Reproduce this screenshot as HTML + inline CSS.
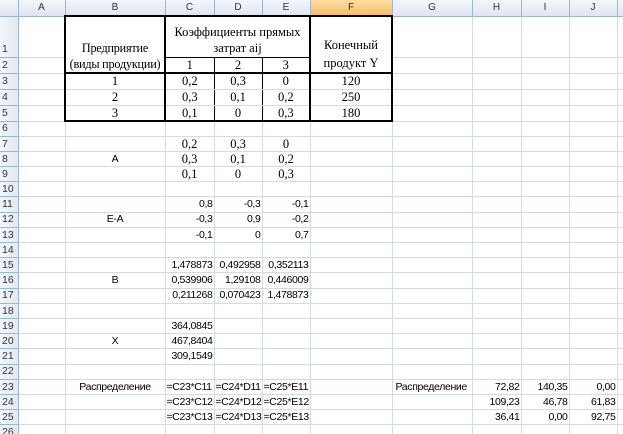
<!DOCTYPE html>
<html><head><meta charset="utf-8"><style>
html,body{margin:0;padding:0;background:#fff;width:623px;height:434px;overflow:hidden}
table{border-collapse:collapse;table-layout:fixed;width:623px;font-family:"Liberation Sans",sans-serif;font-size:10.5px;letter-spacing:-0.35px;color:#000}
td{border-right:1px solid #d4dbe8;border-bottom:1px solid #d4dbe8;padding:0 1px;white-space:nowrap;overflow:visible;line-height:1}
td.h{background:linear-gradient(#f3f6fb,#dfe6f1);border-color:#9eb6ce;color:#333;text-align:center;font-size:10px;letter-spacing:0}
td.hf{background:linear-gradient(#fbdca2,#f6c06a);border-color:#9eb6ce;color:#333;text-align:center;font-size:10px;letter-spacing:0}
td.rn{background:linear-gradient(90deg,#f3f6fb,#e2e9f3);border-color:#9eb6ce;color:#333;text-align:left;padding-left:2px;font-size:10.5px;letter-spacing:0}
.s{font-family:"Liberation Serif",serif;font-size:12.5px;text-align:center;letter-spacing:0}
.r{text-align:right}.c{text-align:center}
.bl{border-left:2px solid #000}.br{border-right:2px solid #000}.bt{border-top:2px solid #000}.bb{border-bottom:2px solid #000}
.tr{border-right:1px solid #000}.tb{border-bottom:1px solid #000}
tr.n{height:15.2px}
</style></head><body>
<table>
<colgroup><col style="width:18px"><col style="width:47px"><col style="width:100px"><col style="width:49px"><col style="width:48px"><col style="width:48px"><col style="width:82px"><col style="width:80px"><col style="width:49px"><col style="width:48px"><col style="width:48px"><col style="width:6px"></colgroup>
<tr style="height:16px"><td class="h"></td><td class="h">A</td><td class="h">B</td><td class="h">C</td><td class="h">D</td><td class="h">E</td><td class="hf">F</td><td class="h">G</td><td class="h">H</td><td class="h">I</td><td class="h">J</td><td class="h"></td></tr>
<tr style="height:41px"><td class="rn" style="vertical-align:bottom;padding-bottom:2px">1</td><td></td><td class="s bl br bt" rowspan="2" style="vertical-align:bottom;padding-bottom:0px;line-height:16px;font-size:12.2px;letter-spacing:-0.2px;border-bottom:2px solid #000">Предприятие<br>(виды продукции)</td><td class="s bt br tb" colspan="3" style="line-height:16px;vertical-align:bottom;padding-bottom:1px">Коэффициенты прямых<br>затрат aij</td><td class="s bt br" rowspan="2" style="vertical-align:bottom;line-height:18px;border-bottom:2px solid #000">Конечный<br>продукт Y</td><td></td><td></td><td></td><td></td><td></td></tr>
<tr style="height:16px"><td class="rn">2</td><td></td><td class="s bb tr">1</td><td class="s bb tr">2</td><td class="s bb br">3</td><td></td><td></td><td></td><td></td><td></td></tr>
<tr style="height:16px"><td class="rn">3</td><td></td><td class="s bl br">1</td><td class="s tr">0,2</td><td class="s tr">0,3</td><td class="s br">0</td><td class="s br">120</td><td></td><td></td><td></td><td></td><td></td></tr>
<tr style="height:16px"><td class="rn">4</td><td></td><td class="s bl br">2</td><td class="s tr">0,3</td><td class="s tr">0,1</td><td class="s br">0,2</td><td class="s br">250</td><td></td><td></td><td></td><td></td><td></td></tr>
<tr style="height:16px"><td class="rn">5</td><td></td><td class="s bl br bb">3</td><td class="s tr bb">0,1</td><td class="s tr bb">0</td><td class="s br bb">0,3</td><td class="s br bb">180</td><td></td><td></td><td></td><td></td><td></td></tr>
<tr class="n"><td class="rn">6</td><td></td><td></td><td></td><td></td><td></td><td></td><td></td><td></td><td></td><td></td><td></td></tr>
<tr class="n"><td class="rn">7</td><td></td><td></td><td class="s">0,2</td><td class="s">0,3</td><td class="s">0</td><td></td><td></td><td></td><td></td><td></td><td></td></tr>
<tr class="n"><td class="rn">8</td><td></td><td class="c">A</td><td class="s">0,3</td><td class="s">0,1</td><td class="s">0,2</td><td></td><td></td><td></td><td></td><td></td><td></td></tr>
<tr class="n"><td class="rn">9</td><td></td><td></td><td class="s">0,1</td><td class="s">0</td><td class="s">0,3</td><td></td><td></td><td></td><td></td><td></td><td></td></tr>
<tr class="n"><td class="rn">10</td><td></td><td></td><td></td><td></td><td></td><td></td><td></td><td></td><td></td><td></td><td></td></tr>
<tr class="n"><td class="rn">11</td><td></td><td></td><td class="r">0,8</td><td class="r">-0,3</td><td class="r">-0,1</td><td></td><td></td><td></td><td></td><td></td><td></td></tr>
<tr class="n"><td class="rn">12</td><td></td><td class="c">E-A</td><td class="r">-0,3</td><td class="r">0,9</td><td class="r">-0,2</td><td></td><td></td><td></td><td></td><td></td><td></td></tr>
<tr class="n"><td class="rn">13</td><td></td><td></td><td class="r">-0,1</td><td class="r">0</td><td class="r">0,7</td><td></td><td></td><td></td><td></td><td></td><td></td></tr>
<tr class="n"><td class="rn">14</td><td></td><td></td><td></td><td></td><td></td><td></td><td></td><td></td><td></td><td></td><td></td></tr>
<tr class="n"><td class="rn">15</td><td></td><td></td><td class="r">1,478873</td><td class="r">0,492958</td><td class="r">0,352113</td><td></td><td></td><td></td><td></td><td></td><td></td></tr>
<tr class="n"><td class="rn">16</td><td></td><td class="c">B</td><td class="r">0,539906</td><td class="r">1,29108</td><td class="r">0,446009</td><td></td><td></td><td></td><td></td><td></td><td></td></tr>
<tr class="n"><td class="rn">17</td><td></td><td></td><td class="r">0,211268</td><td class="r">0,070423</td><td class="r">1,478873</td><td></td><td></td><td></td><td></td><td></td><td></td></tr>
<tr class="n"><td class="rn">18</td><td></td><td></td><td></td><td></td><td></td><td></td><td></td><td></td><td></td><td></td><td></td></tr>
<tr class="n"><td class="rn">19</td><td></td><td></td><td class="r">364,0845</td><td></td><td></td><td></td><td></td><td></td><td></td><td></td><td></td></tr>
<tr class="n"><td class="rn">20</td><td></td><td class="c">X</td><td class="r">467,8404</td><td></td><td></td><td></td><td></td><td></td><td></td><td></td><td></td></tr>
<tr class="n"><td class="rn">21</td><td></td><td></td><td class="r">309,1549</td><td></td><td></td><td></td><td></td><td></td><td></td><td></td><td></td></tr>
<tr class="n"><td class="rn">22</td><td></td><td></td><td></td><td></td><td></td><td></td><td></td><td></td><td></td><td></td><td></td></tr>
<tr class="n"><td class="rn">23</td><td></td><td class="c">Распределение</td><td>=C23*C11</td><td>=C24*D11</td><td>=C25*E11</td><td></td><td style="padding-left:3px">Распределение</td><td class="r">72,82</td><td class="r">140,35</td><td class="r">0,00</td><td></td></tr>
<tr class="n"><td class="rn">24</td><td></td><td></td><td>=C23*C12</td><td>=C24*D12</td><td>=C25*E12</td><td></td><td></td><td class="r">109,23</td><td class="r">46,78</td><td class="r">61,83</td><td></td></tr>
<tr class="n"><td class="rn">25</td><td></td><td></td><td>=C23*C13</td><td>=C24*D13</td><td>=C25*E13</td><td></td><td></td><td class="r">36,41</td><td class="r">0,00</td><td class="r">92,75</td><td></td></tr>
<tr class="n"><td class="rn">26</td><td></td><td></td><td></td><td></td><td></td><td></td><td></td><td></td><td></td><td></td><td></td></tr>
</table>
</body></html>
